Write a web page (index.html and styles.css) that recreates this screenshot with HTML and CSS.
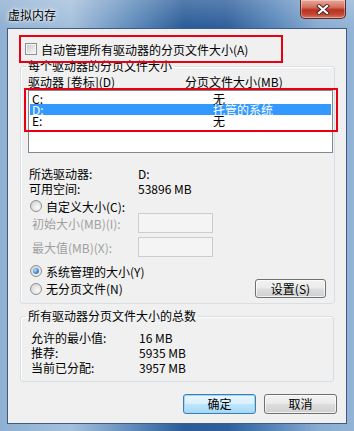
FILE: index.html
```html
<!DOCTYPE html>
<html lang="zh-CN">
<head>
<meta charset="utf-8">
<title>虚拟内存</title>
<link rel="stylesheet" href="styles.css">
</head>
<body>
<div class="window">
  <div class="titlebar">
    <span class="title">虚拟内存</span>
    <button class="close" aria-label="关闭">
      <svg width="14" height="11" viewBox="0 0 14 11">
        <path d="M3 2 L11 9 M11 2 L3 9" stroke="#4a2222" stroke-width="4" stroke-linecap="square" fill="none"/>
        <path d="M3 2 L11 9 M11 2 L3 9" stroke="#ffffff" stroke-width="2.2" stroke-linecap="square" fill="none"/>
      </svg>
    </button>
  </div>
  <div class="client">
    <div class="autobox">
      <span class="check"></span>
      <span>自动管理所有驱动器的分页文件大小(A)</span>
    </div>

    <fieldset class="group group-drives">
      <legend>每个驱动器的分页文件大小</legend>
      <div class="cols"><span>驱动器 [卷标](D)</span><span>分页文件大小(MB)</span></div>
      <div class="listwrap">
        <div class="listbox">
          <div class="row"><span>C:</span><span>无</span></div>
          <div class="row sel"><span>D:</span><span>托管的系统</span></div>
          <div class="row"><span>E:</span><span>无</span></div>
        </div>
        <div class="mark"></div>
      </div>
      <div class="info">
        <span>所选驱动器:</span><span>D:</span>
        <span>可用空间:</span><span>53896 MB</span>
      </div>
      <div class="radio-row first"><span class="radio"></span><span>自定义大小(C):</span></div>
      <div class="field-row"><span class="flabel">初始大小(MB)(I):</span><span class="input"></span></div>
      <div class="field-row second"><span class="flabel">最大值(MB)(X):</span><span class="input"></span></div>
      <div class="radio-row managed"><span class="radio on"></span><span>系统管理的大小(Y)</span></div>
      <div class="radio-row last"><span class="radio"></span><span>无分页文件(N)</span><button class="btn set">设置(S)</button></div>
    </fieldset>

    <fieldset class="group group-total">
      <legend>所有驱动器分页文件大小的总数</legend>
      <div class="totals">
        <span>允许的最小值:</span><span>16 MB</span>
        <span>推荐:</span><span>5935 MB</span>
        <span>当前已分配:</span><span>3957 MB</span>
      </div>
    </fieldset>

    <div class="actions">
      <button class="btn default">确定</button>
      <button class="btn">取消</button>
    </div>
  </div>
</div>
</body>
</html>
```

FILE: styles.css
```css
* { box-sizing: border-box; }
html, body { margin: 0; padding: 0; }
body {
  width: 354px;
  height: 431px;
  overflow: hidden;
  font: 12px "Noto Sans CJK SC", "Liberation Sans", sans-serif;
  color: #000;
}
.window {
  width: 354px;
  height: 431px;
  display: flex;
  flex-direction: column;
  background:
    linear-gradient(180deg, rgba(255,255,255,0.2) 0px, rgba(255,255,255,0) 28px),
    linear-gradient(90deg, #8fb0d2 0%, #a4bfdb 20%, #5d89ba 38%, #2a5c98 52%, #2e5f9b 64%, #5a88bb 78%, #8aacd1 90%, #93b4d6 100%);
}
.titlebar {
  height: 28px;
  display: flex;
  align-items: flex-start;
  flex: none;
}
.title {
  padding: 7px 0 0 8px;
  line-height: 16px;
  font-size: 12px;
  text-shadow: 0 0 6px #fff, 0 0 3px #fff;
}
.close {
  margin: 0 8px 0 auto;
  width: 46px;
  height: 19px;
  padding: 0;
  border: 1px solid #5b2a2a;
  border-top: none;
  border-radius: 0 0 5px 5px;
  background: linear-gradient(180deg, #e9a99c 0%, #d47060 40%, #b8321f 55%, #c44634 80%, #d77a63 100%);
  box-shadow: inset 0 0 0 1px rgba(255,255,255,0.35);
  display: flex;
  align-items: center;
  justify-content: center;
}
.client {
  flex: 1;
  margin: 0 7px 7px;
  border: 1px solid #3f5c80;
  background: #f0f0f0;
  padding: 6px 9px 0 11px;
  display: flex;
  flex-direction: column;
  align-items: flex-start;
}
.autobox {
  width: 264px;
  height: 28px;
  border: 2px solid #e60012;
  display: flex;
  align-items: center;
  gap: 4px;
  padding-left: 4px;
  position: relative;
  z-index: 2;
}
.check {
  width: 12px;
  height: 12px;
  border: 1px solid #8e8f8f;
  background: linear-gradient(135deg, #c6c8cc 0%, #e6e6e6 60%, #f8f8f8 100%);
  box-shadow: inset 0 0 0 1px #f4f4f4;
}
.group {
  margin: 0 0 0 1px;
  padding: 0;
  border: 1px solid #d5dfe5;
  border-radius: 3px;
  min-width: 0;
  box-shadow: inset 1px 1px 0 #fff;
}
.group legend {
  margin-left: 5px;
  padding: 0 2px;
  height: 14px;
  line-height: 14px;
}
.group-drives {
  width: 315px;
  margin-top: -4px;
  padding-bottom: 5px;
}
.cols {
  margin-top: 3px;
  display: grid;
  grid-template-columns: 157px 1fr;
  padding-left: 7px;
  height: 12px;
  line-height: 12px;
}
.listwrap {
  position: relative;
  margin: 2px 0 0 7px;
  width: 305px;
}
.listbox {
  height: 63px;
  border: 1px solid #828790;
  background: #fff;
  padding: 2px 1px 0 1px;
}
.row {
  display: grid;
  grid-template-columns: 181px 1fr;
  height: 11px;
  line-height: 11px;
  padding-left: 2px;
  white-space: nowrap;
}
.row.sel {
  background: #3399ff;
  color: #fff;
}
.mark {
  position: absolute;
  left: -4px;
  top: -2px;
  width: 314px;
  height: 44px;
  border: 2px solid #e60012;
  pointer-events: none;
}
.info {
  margin-top: 13px;
  padding-left: 8px;
  display: grid;
  grid-template-columns: 109px 1fr;
  line-height: 15px;
}
.radio-row {
  display: flex;
  align-items: center;
  gap: 4px;
  padding-left: 9px;
  height: 14px;
}
.radio-row.first { margin-top: 3px; }
.radio-row.managed { margin-top: 7px; }
.radio-row.last { margin-top: 1px; height: 19px; padding-right: 8px; }
.radio {
  width: 12px;
  height: 12px;
  border-radius: 50%;
  border: 1px solid #8e8f8f;
  background: radial-gradient(circle at 65% 65%, #fafafa 0%, #e4e4e4 50%, #c9c9c9 100%);
  display: flex;
  align-items: center;
  justify-content: center;
  flex: none;
}
.radio.on::after {
  content: "";
  width: 6px;
  height: 6px;
  border-radius: 50%;
  background: radial-gradient(circle at 35% 35%, #b8e2fb 0%, #4a90d9 50%, #1b57a5 100%);
}
.field-row {
  display: flex;
  align-items: center;
  height: 20px;
  padding-left: 11px;
  color: #a0a0a0;
}
.field-row.second { margin-top: 4px; }
.flabel { width: 106px; }
.input {
  width: 75px;
  height: 20px;
  border: 1px solid #c9cdd1;
  background: #f4f4f4;
}
.btn {
  font: inherit;
  color: #000;
  padding: 0;
  border: 1px solid #707070;
  border-radius: 3px;
  background: linear-gradient(180deg, #f2f2f2 0%, #ebebeb 48%, #dddddd 52%, #cfcfcf 100%);
  box-shadow: inset 0 0 0 1px rgba(255,255,255,0.7);
  line-height: 16px;
}
.btn.set {
  margin-left: auto;
  width: 71px;
  height: 19px;
}
.group-total {
  width: 314px;
  margin-top: 5px;
  padding-bottom: 6px;
}
.totals {
  padding: 7px 0 0 10px;
  display: grid;
  grid-template-columns: 108px 1fr;
  line-height: 15px;
}
.actions {
  margin-top: 12px;
  align-self: stretch;
  display: flex;
  justify-content: flex-end;
  gap: 8px;
}
.actions .btn {
  width: 73px;
  height: 20px;
}
.btn.default {
  border-color: #3c7fb1;
  background: linear-gradient(180deg, #eaf6fd 0%, #d9f0fc 48%, #bee6fd 52%, #a7d9f5 100%);
  box-shadow: inset 0 0 0 1px #9fd6f2;
}
```
